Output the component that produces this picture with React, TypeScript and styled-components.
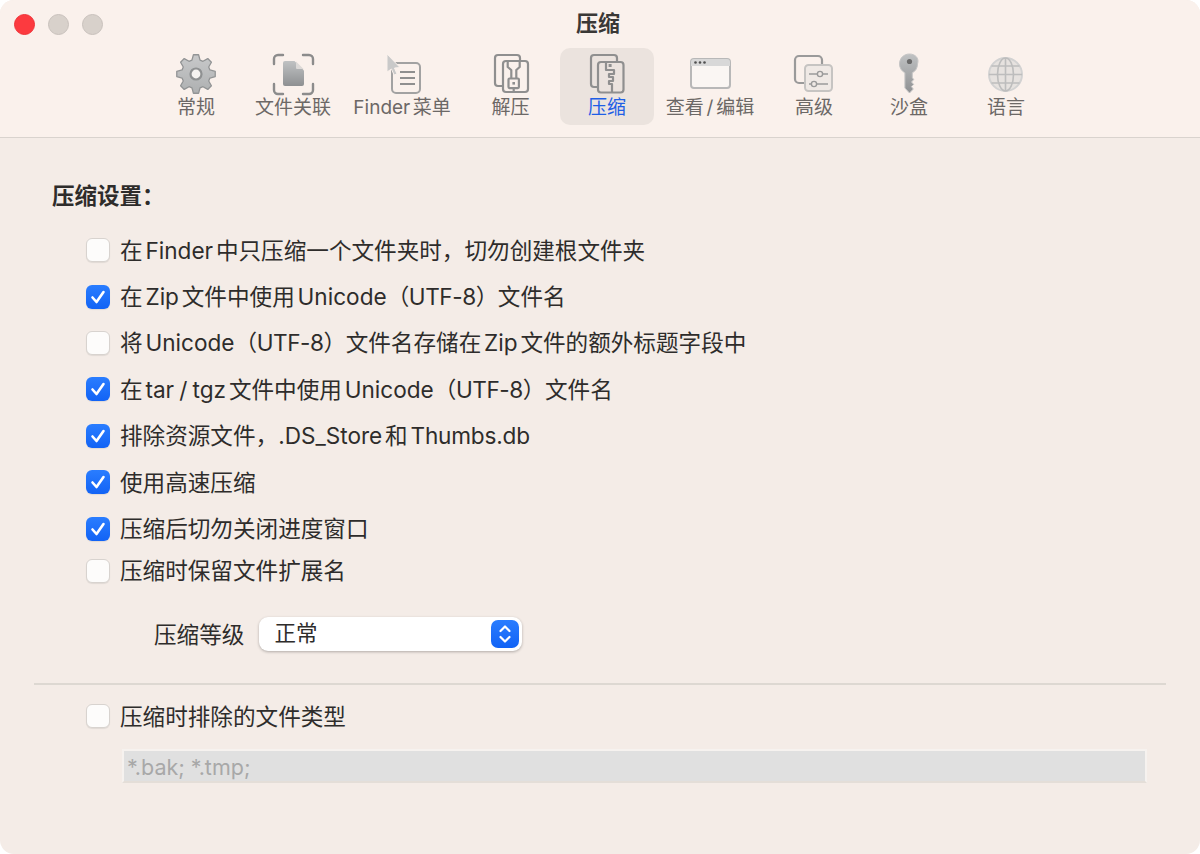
import React from 'react';
import styled, { createGlobalStyle } from 'styled-components';

const GlobalStyle = createGlobalStyle`
  html, body {
    margin: 0;
    padding: 0;
    background: #ffffff;
  }
  body {
    font-family: Inter, "Noto Sans CJK SC", sans-serif;
    text-autospace: normal;
  }
`;

const Window = styled.div`
  width: 1200px;
  height: 854px;
  border-radius: 14px;
  overflow: hidden;
  background: #f4ece7;
  color: #2e2c2b;
`;

const Titlebar = styled.header`
  height: 137px;
  background: #faf1ec;
  border-bottom: 1px solid #d9d3ce;
`;

const TitleRow = styled.div`
  height: 48px;
  display: grid;
  grid-template-columns: 1fr auto 1fr;
  align-items: center;
  padding: 0 4px 0 0;
`;

const Lights = styled.div`
  display: flex;
  gap: 13px;
  padding-left: 14px;
`;

const Light = styled.span<{ $color: string; $edge: string }>`
  width: 21px;
  height: 21px;
  box-sizing: border-box;
  border-radius: 50%;
  background: ${({ $color }) => $color};
  border: 1px solid ${({ $edge }) => $edge};
`;

const Title = styled.div`
  font-size: 22px;
  font-weight: 600;
  color: #3a3836;
  margin-bottom: 6px;
`;

const Toolbar = styled.nav`
  display: flex;
  padding-left: 149px;
`;

const Tab = styled.div<{ $width: number; $active?: boolean }>`
  width: ${({ $width }) => $width}px;
  height: 77px;
  box-sizing: border-box;
  padding-top: 4px;
  display: flex;
  flex-direction: column;
  align-items: center;
  border-radius: 10px;
  background: ${({ $active }) => ($active ? '#ebe3de' : 'transparent')};
`;

const TabIcon = styled.svg`
  display: block;
  width: 48px;
  height: 44px;
  flex: none;
`;

const TabLabel = styled.span<{ $active?: boolean }>`
  margin-top: 2px;
  font-size: 19px;
  line-height: 20px;
  white-space: nowrap;
  word-spacing: -2.6px;
  color: ${({ $active }) => ($active ? '#1f5fe6' : '#6c6866')};
`;

const Main = styled.main`
  padding-top: 44px;
`;

const Heading = styled.div`
  height: 28px;
  line-height: 28px;
  padding-left: 52px;
  font-size: 22.5px;
  font-weight: 600;
`;

const Options = styled.div`
  margin-top: 17px;
  padding-left: 86px;
`;

const Row = styled.div<{ $tight?: boolean }>`
  height: 46.4px;
  display: flex;
  align-items: center;
  gap: 10px;
  margin-top: ${({ $tight }) => ($tight ? '-4px' : '0')};
  font-size: 22.6px;
  white-space: nowrap;
`;

const RowText = styled.span`
  margin-bottom: 2px;
  word-spacing: -1.2px;
`;

const Narrow = styled.span<{ $by: number }>`
  letter-spacing: ${({ $by }) => $by}px;
`;

const Box = styled.span<{ $checked?: boolean }>`
  width: 24px;
  height: 24px;
  flex: none;
  box-sizing: border-box;
  border-radius: 6px;
  display: flex;
  align-items: center;
  justify-content: center;
  background: ${({ $checked }) => ($checked ? 'linear-gradient(#2a7dff, #1263f5)' : '#fdfcfb')};
  border: ${({ $checked }) => ($checked ? 'none' : '1px solid #d8d3cf')};
  box-shadow: 0 1px 1px rgba(0, 0, 0, 0.08);
`;

const LevelRow = styled.div`
  height: 34px;
  margin-top: 22.5px;
  padding-left: 154px;
  display: flex;
  align-items: center;
  gap: 15px;
  font-size: 22.6px;
`;

const LevelLabel = styled.span`
  margin-bottom: 1px;
`;

const Select = styled.div`
  width: 263px;
  height: 34px;
  flex: none;
  box-sizing: border-box;
  padding: 0 3px 0 15px;
  display: flex;
  align-items: center;
  justify-content: space-between;
  border-radius: 9px;
  background: #ffffff;
  box-shadow: 0 1px 3px rgba(0, 0, 0, 0.28);
  font-size: 21.5px;
`;

const SelectValue = styled.span`
  margin-bottom: 5px;
`;

const Stepper = styled.span`
  width: 28px;
  height: 28px;
  border-radius: 7px;
  display: flex;
  align-items: center;
  justify-content: center;
  background: linear-gradient(#2a7dff, #1263f5);
`;

const Divider = styled.hr`
  margin: 32px 34px 0;
  height: 2px;
  border: none;
  background: #ddd8d2;
`;

const Exclude = styled.div`
  margin-top: 8.5px;
  padding-left: 86px;
`;

const PatternField = styled.div`
  margin: 9px 0 0 36px;
  width: 1025px;
  height: 34px;
  box-sizing: border-box;
  padding-left: 3px;
  line-height: 33px;
  background: #e0e0e0;
  border: 2px solid #f6f2ef;
  border-bottom-color: #e4ded8;
  font-size: 21.5px;
  color: #a8a8a8;
`;

const gearPath = (() => {
  const pts: string[] = [];
  const teeth = 8;
  for (let i = 0; i < teeth; i++) {
    const a = (i / teeth) * Math.PI * 2 - Math.PI / 2;
    const step = (Math.PI * 2) / teeth;
    const at = (r: number, d: number) =>
      `${(24 + r * Math.cos(a + d * step)).toFixed(2)} ${(22 + r * Math.sin(a + d * step)).toFixed(2)}`;
    pts.push(at(14.5, -0.36), at(19.4, -0.17), at(19.4, 0.17), at(14.5, 0.36));
  }
  return `M${pts.join('L')}Z`;
})();

const Defs = () => (
  <svg width="0" height="0" style={{ position: 'absolute' }}>
    <defs>
      <linearGradient id="metal" x1="0" y1="0" x2="0" y2="1">
        <stop offset="0" stopColor="#c0c2c3" />
        <stop offset="1" stopColor="#8e9092" />
      </linearGradient>
      <linearGradient id="gear" x1="0" y1="0" x2="0" y2="1">
        <stop offset="0" stopColor="#c8c9ca" />
        <stop offset="1" stopColor="#aeb0b1" />
      </linearGradient>
    </defs>
  </svg>
);

const GearIcon = () => (
  <TabIcon viewBox="0 0 48 44">
    <path d={gearPath} fill="url(#gear)" stroke="#929495" strokeWidth="1.3" strokeLinejoin="round" />
    <circle cx="24" cy="22" r="6.6" fill="#8f9192" />
    <circle cx="24" cy="22" r="4.4" fill="#f6f3f1" />
  </TabIcon>
);

const FilesIcon = () => (
  <TabIcon viewBox="0 0 48 44">
    <path
      d="M5 12V7a4 4 0 0 1 4-4h5M34 3h6a4 4 0 0 1 4 4v5M44 32v6a4 4 0 0 1-4 4h-6M14 42H9a4 4 0 0 1-4-4v-6"
      fill="none"
      stroke="#8c8c8c"
      strokeWidth="2.4"
      strokeLinecap="round"
    />
    <path d="M16 9h9.5L35 18.5V32a2 2 0 0 1-2 2H16a2 2 0 0 1-2-2V11a2 2 0 0 1 2-2Z" fill="url(#metal)" />
    <path d="M27 9.5 34.5 17H28a1 1 0 0 1-1-1Z" fill="#dcd9d7" />
  </TabIcon>
);

const FinderIcon = () => (
  <TabIcon viewBox="0 0 48 44">
    <rect x="14" y="11" width="28" height="30" rx="4" fill="none" stroke="#a2a2a2" strokeWidth="2" />
    <path d="M22 20h15M22 26h15M22 32h15" stroke="#8f8f8f" strokeWidth="1.8" />
    <path d="M9 2 22 15.5 16.5 16 19 22 16 23 13.5 17 9 20Z" fill="#c9c9c9" stroke="#faf1ec" strokeWidth="1" />
  </TabIcon>
);

const ZipLine = styled.path`
  fill: none;
  stroke: #8f8f8f;
  stroke-width: 2.2;
  stroke-linejoin: round;
`;

const UnzipIcon = () => (
  <TabIcon viewBox="0 0 48 44">
    <ZipLine d="M15 34h-4a3 3 0 0 1-3-3V6a3 3 0 0 1 3-3h19a3 3 0 0 1 3 3v3" />
    <rect x="16" y="9" width="25" height="31" rx="3" fill="none" stroke="#8f8f8f" strokeWidth="2.2" />
    <ZipLine d="M20.7 9v6l3.6 3v8.3M32.7 9v6l-3.4 3v8.3M26.7 36.3V40" />
    <rect x="21.5" y="26.5" width="10.4" height="9.6" rx="1" fill="none" stroke="#8f8f8f" strokeWidth="2.2" />
    <rect x="25.4" y="30" width="2.6" height="2.6" fill="#8f8f8f" />
  </TabIcon>
);

const CompressIcon = () => (
  <TabIcon viewBox="0 0 48 44">
    <ZipLine d="M14 35h-3a3 3 0 0 1-3-3V6a3 3 0 0 1 3-3h20a3 3 0 0 1 3 3v4" />
    <rect x="15" y="10" width="25.5" height="30.5" rx="3" fill="none" stroke="#8f8f8f" strokeWidth="2.2" />
    <ZipLine d="M23 10v8h8v4h-5v3h4v4h-4v3h3v8" />
    <rect x="25.6" y="12" width="3" height="3" fill="#8f8f8f" />
  </TabIcon>
);

const WindowIcon = () => (
  <TabIcon viewBox="0 0 48 44">
    <rect x="5" y="7" width="39" height="29" rx="3" fill="#faf6f3" stroke="#b8b8b8" strokeWidth="2" />
    <path d="M5 14v-4a3 3 0 0 1 3-3h33a3 3 0 0 1 3 3v4Z" fill="#d8d8d8" />
    <circle cx="9.5" cy="10.5" r="1.3" fill="#505050" />
    <circle cx="14" cy="10.5" r="1.3" fill="#505050" />
    <circle cx="18.5" cy="10.5" r="1.3" fill="#505050" />
  </TabIcon>
);

const AdvancedIcon = () => (
  <TabIcon viewBox="0 0 48 44">
    <path d="M14 31H9a4 4 0 0 1-4-4V8a4 4 0 0 1 4-4h19a4 4 0 0 1 4 4v4" fill="none" stroke="#9a9a9a" strokeWidth="2.2" />
    <rect x="15" y="13" width="27" height="26" rx="3.5" fill="#efe9e5" stroke="#c6c4c2" strokeWidth="2" />
    <path d="M19 22h8M33 22h5M19 32h2M27 32h11" stroke="#9a9a9a" strokeWidth="1.4" />
    <circle cx="30" cy="22" r="2.6" fill="none" stroke="#9a9a9a" strokeWidth="1.4" />
    <circle cx="24" cy="32" r="2.6" fill="none" stroke="#9a9a9a" strokeWidth="1.4" />
  </TabIcon>
);

const KeyIcon = () => (
  <TabIcon viewBox="0 0 48 44">
    <path
      d="M24.5 2C18.7 2 14.5 6.3 14.5 12c0 3.9 2.2 7.2 5.4 8.8V36l4.6 5 3.8-4-2-2.4 2.4-2.2-2.2-2.4 2.2-2.4-1.4-2V20.8c3.3-1.6 5.2-4.9 5.2-8.8C34.5 6.3 30.3 2 24.5 2Z"
      fill="url(#metal)"
      stroke="#c6c6c6"
      strokeWidth="1"
    />
    <circle cx="24.5" cy="9.5" r="2.6" fill="#6a6a6a" />
  </TabIcon>
);

const GlobeIcon = () => (
  <TabIcon viewBox="0 0 48 44">
    <circle cx="23.5" cy="22.5" r="16.5" fill="#e6e2df" stroke="#d2d2d2" strokeWidth="2" />
    <ellipse cx="23.5" cy="22.5" rx="8" ry="16.5" fill="none" stroke="#bdbdbd" strokeWidth="1.6" />
    <path d="M23.5 6v33M7 22.5h33M9.5 14h28M9.5 31h28" fill="none" stroke="#bdbdbd" strokeWidth="1.6" />
  </TabIcon>
);

const tabs = [
  { label: '常规', width: 94, icon: <GearIcon /> },
  { label: '文件关联', width: 100, icon: <FilesIcon /> },
  { label: 'Finder菜单', width: 118, icon: <FinderIcon /> },
  { label: '解压', width: 99, icon: <UnzipIcon /> },
  { label: '压缩', width: 94, icon: <CompressIcon />, active: true },
  { label: '查看 / 编辑', width: 112, icon: <WindowIcon /> },
  { label: '高级', width: 96, icon: <AdvancedIcon /> },
  { label: '沙盒', width: 94, icon: <KeyIcon /> },
  { label: '语言', width: 100, icon: <GlobeIcon /> },
];

const utf8 = <Narrow $by={-0.45}>（UTF-8）</Narrow>;

const options = [
  { id: 'root', label: <>在Finder中只压缩一个文件夹时，切勿创建根文件夹</>, checked: false },
  { id: 'zip', label: <>在Zip文件中使用Unicode{utf8}文件名</>, checked: true },
  { id: 'extra', label: <>将Unicode{utf8}文件名存储在Zip文件的额外标题字段中</>, checked: false },
  { id: 'tar', label: <>在tar / tgz文件中使用Unicode{utf8}文件名</>, checked: true },
  { id: 'res', label: <>排除资源文件，.DS_Store和<Narrow $by={-0.2}>Thumbs.db</Narrow></>, checked: true },
  { id: 'fast', label: <>使用高速压缩</>, checked: true },
  { id: 'keep', label: <>压缩后切勿关闭进度窗口</>, checked: true },
  { id: 'ext', label: <>压缩时保留文件扩展名</>, checked: false, tight: true },
];

const Check = ({ checked }: { checked?: boolean }) => (
  <Box $checked={checked}>
    {checked && (
      <svg width="18" height="18" viewBox="0 0 18 18">
        <path d="M3.5 9.5 7.5 14 14.5 4" fill="none" stroke="#fff" strokeWidth="2.6" strokeLinecap="round" strokeLinejoin="round" />
      </svg>
    )}
  </Box>
);

export default function App() {
  return (
    <>
      <GlobalStyle />
      <Defs />
      <Window>
        <Titlebar>
          <TitleRow>
            <Lights>
              <Light $color="#fc3a3f" $edge="#ee3338" />
              <Light $color="#d8d1cb" $edge="#c8c1bc" />
              <Light $color="#d8d1cb" $edge="#c8c1bc" />
            </Lights>
            <Title>压缩</Title>
          </TitleRow>
          <Toolbar>
            {tabs.map(tab => (
              <Tab key={tab.label} $width={tab.width} $active={tab.active}>
                {tab.icon}
                <TabLabel $active={tab.active}>{tab.label}</TabLabel>
              </Tab>
            ))}
          </Toolbar>
        </Titlebar>
        <Main>
          <Heading>压缩设置：</Heading>
          <Options>
            {options.map(option => (
              <Row key={option.id} $tight={option.tight}>
                <Check checked={option.checked} />
                <RowText>{option.label}</RowText>
              </Row>
            ))}
          </Options>
          <LevelRow>
            <LevelLabel>压缩等级</LevelLabel>
            <Select>
              <SelectValue>正常</SelectValue>
              <Stepper>
                <svg width="16" height="22" viewBox="0 0 16 22">
                  <path d="M3.5 8 8 3.5 12.5 8M3.5 14 8 18.5 12.5 14" fill="none" stroke="#fff" strokeWidth="2.2" strokeLinecap="round" strokeLinejoin="round" />
                </svg>
              </Stepper>
            </Select>
          </LevelRow>
          <Divider />
          <Exclude>
            <Row>
              <Check />
              <RowText>压缩时排除的文件类型</RowText>
            </Row>
            <PatternField>*.bak; *.tmp;</PatternField>
          </Exclude>
        </Main>
      </Window>
    </>
  );
}
